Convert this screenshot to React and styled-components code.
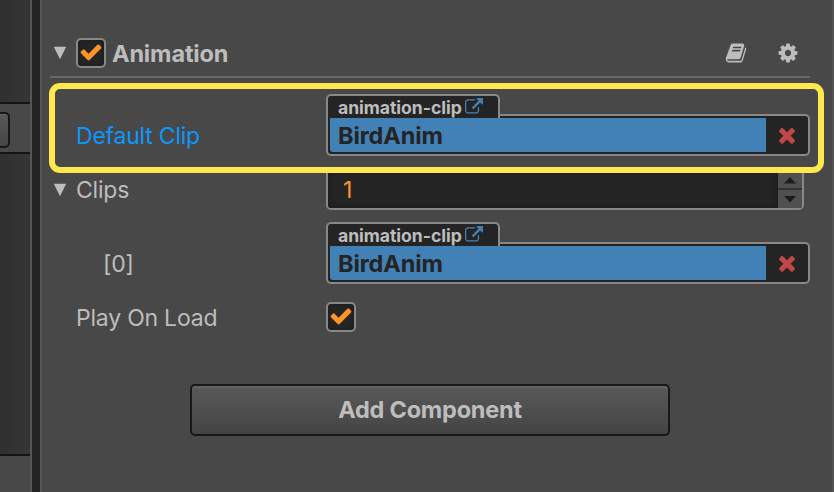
import React from "react";
import styled, { createGlobalStyle, css } from "styled-components";

const GlobalStyle = createGlobalStyle`
  * {
    box-sizing: border-box;
  }

  body {
    margin: 0;
    background: #484848;
    font-family: "Inter", "Liberation Sans", sans-serif;
    overflow: hidden;
  }
`;

const Window = styled.div`
  display: flex;
  width: 834px;
  height: 492px;
  overflow: hidden;
  color: #bdbdbd;
`;

const SidePanel = styled.div`
  display: flex;
  flex-direction: column;
  width: 30px;
  background: linear-gradient(to right, #303030, #353535);
`;

const SideBar = styled.div`
  height: 52px;
  margin-top: 102px;
  padding: 8px 0 0;
  border-top: 2px solid #141414;
  border-bottom: 2px solid #141414;
  background: #484848;
`;

const SideButton = styled.div`
  width: 10px;
  height: 36px;
  border: 2px solid #171717;
  border-left: 0;
  border-radius: 0 5px 5px 0;
  background: linear-gradient(#585858, #454545);
  box-shadow: inset 0 1px 0 #6a6a6a;
`;

const SideFooter = styled.div`
  flex: 1;
  margin-top: 300px;
  border-top: 2px solid #141414;
  background: #484848;
`;

const Divider = styled.div`
  width: 12px;
  border: solid #565656;
  border-width: 0 2px;
  background: #242424;
`;

const Inspector = styled.div`
  position: relative;
  width: 792px;
  padding-top: 38px;
  border-right: 2px solid #535353;
  background: #484848;
`;

const Header = styled.div`
  display: flex;
  align-items: center;
  height: 40px;
  margin: 0 22px 0 8px;
  padding: 0 11px 8px 3px;
  border-bottom: 2px solid #686868;
`;

const Title = styled.div`
  flex: 1;
  margin-left: 6px;
  padding-top: 1px;
  font-size: 23.5px;
  font-weight: 700;
  line-height: 30px;
  letter-spacing: -0.15px;
`;

const HeaderIcons = styled.div`
  display: flex;
  gap: 30px;
  margin-top: -1px;
`;

const Arrow = styled.svg`
  display: block;
  flex: none;
  width: 14px;
  height: 14px;
  fill: #bdbdbd;
`;

const Box = styled.div`
  display: flex;
  align-items: center;
  justify-content: center;
  width: 30px;
  height: 30px;
  margin-left: ${(props) => props.$indent || 0}px;
  padding-bottom: 3px;
  border: 2px solid #888;
  border-radius: 5px;
  background: #252525;
  box-shadow: inset 0 0 5px #1a1a1a;
`;

const Glyph = styled.svg`
  display: block;
  flex: none;
  width: ${(props) => props.$size}px;
  height: ${(props) => props.$size}px;
  fill: ${(props) => props.$color || "#bdbdbd"};
`;

const Row = styled.div`
  display: grid;
  grid-template-columns: 273px auto;
  margin: ${(props) => props.$gap}px 0 0 11px;
`;

const Label = styled.div`
  display: flex;
  align-items: center;
  gap: 9px;
  height: ${(props) => props.$height || 42}px;
  margin-top: ${(props) => props.$top || 0}px;
  padding-top: 2px;
  padding-left: ${(props) => (props.$indent === undefined ? 23 : props.$indent)}px;
  color: ${(props) => (props.$active ? "#0e97fb" : "#bdbdbd")};
  font-size: 23px;
  letter-spacing: -0.22px;
  white-space: nowrap;
`;

const Field = styled.div`
  width: 484px;
`;

const Tab = styled.div`
  position: relative;
  z-index: 1;
  display: flex;
  align-items: center;
  gap: 3px;
  width: 174px;
  height: 24px;
  padding: 0 0 0 10px;
  border: 2px solid #888;
  border-bottom: 0;
  border-radius: 5px 5px 0 0;
  background: #242424;
  font-size: 17.6px;
  font-weight: 700;
  letter-spacing: -0.05px;
  white-space: nowrap;
`;

const ClipBox = styled.div`
  display: flex;
  height: 42px;
  margin-top: -4px;
  padding: 2px;
  border: 2px solid #888;
  border-radius: 0 5px 5px 5px;
  background: #242424;
`;

const ClipName = styled.div`
  width: 436px;
  padding-left: 8px;
  border-radius: 0 0 0 3px;
  background: #4281b6;
  color: #242424;
  font-size: 23.5px;
  font-weight: 700;
  line-height: 35px;
  letter-spacing: -0.1px;
`;

const Remove = styled.div`
  display: flex;
  flex: 1;
  align-items: center;
  justify-content: center;
  padding-left: 2px;
`;

const NumberInput = styled.div`
  display: flex;
  width: 478px;
  height: 42px;
  border: 2px solid #888;
  border-radius: 5px;
  background: #242424;
  overflow: hidden;
`;

const NumberValue = styled.div`
  flex: 1;
  padding-left: 15px;
  box-shadow: inset 0 0 5px #161616;
  color: #fd942b;
  font-size: 23px;
  line-height: 41px;
`;

const Spinner = styled.div`
  display: flex;
  flex-direction: column;
  width: 24px;
  gap: 2px;
  background: #333;
`;

const step = css`
  display: flex;
  align-items: center;
  justify-content: center;
  background: #505050;
`;

const StepUp = styled.div`
  ${step}
  height: 18px;
  padding-top: 3px;
`;

const StepDown = styled.div`
  ${step}
  flex: 1;
`;

const AddButton = styled.button`
  display: block;
  width: 480px;
  height: 52px;
  margin: 52px 0 0 148px;
  padding: 0 0 2px;
  border: 2px solid #181818;
  border-radius: 5px;
  background: linear-gradient(#595959, #444);
  box-shadow: inset 0 2px 1px #656565;
  color: #bdbdbd;
  font-family: inherit;
  font-size: 23.5px;
  font-weight: 700;
  letter-spacing: -0.22px;
`;

const Highlight = styled.div`
  position: absolute;
  z-index: 2;
  top: 82.5px;
  left: 7px;
  width: 774.5px;
  height: 90.5px;
  border: 6px solid #ffe84d;
  border-radius: 11px;
`;

const icons = {
  check:
    "M1671 566q0 40-28 68l-724 724-136 136q-28 28-68 28t-68-28l-136-136-362-362q-28-28-28-68t28-68l136-136q28-28 68-28t68 28l294 295 656-657q28-28 68-28t68 28l136 136q28 28 28 68z",
  times:
    "M1490 1322q0 40-28 68l-136 136q-28 28-68 28t-68-28l-294-294-294 294q-28 28-68 28t-68-28l-136-136q-28-28-28-68t28-68l294-294-294-294q-28-28-28-68t28-68l136-136q28-28 68-28t68 28l294 294 294-294q28-28 68-28t68 28l136 136q28 28 28 68t-28 68l-294 294 294 294q28 28 28 68z",
  external:
    "M1408 928v320q0 119-84.500 203.500t-203.500 84.500h-832q-119 0-203.500-84.500t-84.500-203.500v-832q0-119 84.500-203.500t203.500-84.500h704q14 0 23 9t9 23v64q0 14-9 23t-23 9h-704q-66 0-113 47t-47 113v832q0 66 47 113t113 47h832q66 0 113-47t47-113v-320q0-14 9-23t23-9h64q14 0 23 9t9 23zm384-864v512q0 26-19 45t-45 19-45-19l-176-176-652 652q-10 10-23 10t-23-10l-114-114q-10-10-10-23t10-23l652-652-176-176q-19-19-19-45t19-45 45-19h512q26 0 45 19t19 45z",
  book: "M1703 478q40 57 18 129l-275 906q-19 64-76.500 107.500t-122.500 43.500h-923q-77 0-148.500-53.500t-99.500-131.500q-24-67-2-127 0-4 3-27t4-37q1-8-3-21.500t-3-19.500q2-11 8-21t16.500-23.500 16.500-23.500q23-38 45-91.500t30-91.500q3-10 .5-30t-.5-28q3-11 17-28t17-23q21-36 42-92t25-90q1-9-2.500-32t.5-28q4-13 22-30.500t22-22.500q19-26 42.500-84.500t27.500-96.500q1-8-3-25.500t-2-26.500q2-8 9-18t18-23 17-21q8-12 16.500-30.500t15-35 16-36 19.500-32 26.500-23.500 36-11.500 47.500 5.500l-1 3q38-9 51-9h761q74 0 114 56t18 130l-274 906q-36 119-71.500 153.500t-128.500 34.500h-869q-27 0-38 15-11 16-1 43 24 70 144 70h923q29 0 56-15.500t35-41.500l300-987q7-22 5-57 38 15 59 43zm-1064 2q-4 13 2 22.500t20 9.500h608q13 0 25.500-9.500t16.500-22.500l21-64q4-13-2-22.500t-20-9.500h-608q-13 0-25.500 9.500t-16.500 22.500zm-83 256q-4 13 2 22.500t20 9.500h608q13 0 25.500-9.500t16.500-22.500l21-64q4-13-2-22.500t-20-9.500h-608q-13 0-25.500 9.500t-16.500 22.500z",
  cog: "M1152 896q0-106-75-181t-181-75-181 75-75 181 75 181 181 75 181-75 75-181zm512-109v222q0 12-8 23t-20 13l-185 28q-19 54-39 91 35 50 107 138 10 12 10 25t-9 23q-27 37-99 108t-94 71q-12 0-26-9l-138-108q-44 23-91 38-16 136-29 186-7 28-36 28h-222q-14 0-24.500-8.500t-11.500-21.500l-28-184q-49-16-90-37l-141 107q-10 9-25 9-14 0-25-11-126-114-165-168-7-10-7-23 0-12 8-23 15-21 51-66.500t54-70.500q-27-50-41-99l-183-27q-13-2-21-12.500t-8-23.500v-222q0-12 8-23t19-13l186-28q14-46 39-92-40-57-107-138-10-12-10-24 0-10 9-23 26-36 98.500-107.500t94.500-71.500q13 0 26 10l138 107q44-23 91-38 16-136 29-186 7-28 36-28h222q14 0 24.500 8.500t11.500 21.500l28 184q49 16 90 37l142-107q9-9 24-9 13 0 25 10 129 119 165 170 7 8 7 22 0 12-8 23-15 21-51 66.500t-54 70.500q26 50 41 98l183 28q13 2 21 12.500t8 23.500z",
};

const Icon = ({ name, size, color }) => (
  <Glyph viewBox="0 0 1792 1792" $size={size} $color={color}>
    <path d={icons[name]} />
  </Glyph>
);

const FoldArrow = () => (
  <Arrow viewBox="0 0 14 14">
    <path d="M0.8 0.8h12.4L7 13.2z" />
  </Arrow>
);

const Checkbox = ({ indent }) => (
  <Box $indent={indent}>
    <Icon name="check" size={24} color="#fd942b" />
  </Box>
);

const ClipField = ({ type, name }) => (
  <Field>
    <Tab>
      {type}
      <Icon name="external" size={18} color="#4281b6" />
    </Tab>
    <ClipBox>
      <ClipName>{name}</ClipName>
      <Remove>
        <Icon name="times" size={24} color="#c04848" />
      </Remove>
    </ClipBox>
  </Field>
);

export default function App() {
  return (
    <>
      <GlobalStyle />
      <Window>
        <SidePanel>
          <SideBar>
            <SideButton />
          </SideBar>
          <SideFooter />
        </SidePanel>
        <Divider />
        <Inspector>
          <Header>
            <FoldArrow />
            <Checkbox indent={9} />
            <Title>Animation</Title>
            <HeaderIcons>
              <Icon name="book" size={22} />
              <Icon name="cog" size={22} />
            </HeaderIcons>
          </Header>

          <Row $gap={16}>
            <Label $active $top={20}>
              Default Clip
            </Label>
            <ClipField type="animation-clip" name="BirdAnim" />
          </Row>

          <Row $gap={12}>
            <Label $indent={0}>
              <FoldArrow />
              Clips
            </Label>
            <NumberInput>
              <NumberValue>1</NumberValue>
              <Spinner>
                <StepUp>
                  <svg width="12" height="7">
                    <path d="M6 0l6 6.500H0z" fill="#1c1c1c" />
                  </svg>
                </StepUp>
                <StepDown>
                  <svg width="12" height="7">
                    <path d="M0 0h12L6 6.500z" fill="#1c1c1c" />
                  </svg>
                </StepDown>
              </Spinner>
            </NumberInput>
          </Row>

          <Row $gap={12}>
            <Label $top={20} $indent={50}>
              [0]
            </Label>
            <ClipField type="animation-clip" name="BirdAnim" />
          </Row>

          <Row $gap={18}>
            <Label $height={30}>Play On Load</Label>
            <Checkbox />
          </Row>

          <AddButton>Add Component</AddButton>
          <Highlight />
        </Inspector>
      </Window>
    </>
  );
}
